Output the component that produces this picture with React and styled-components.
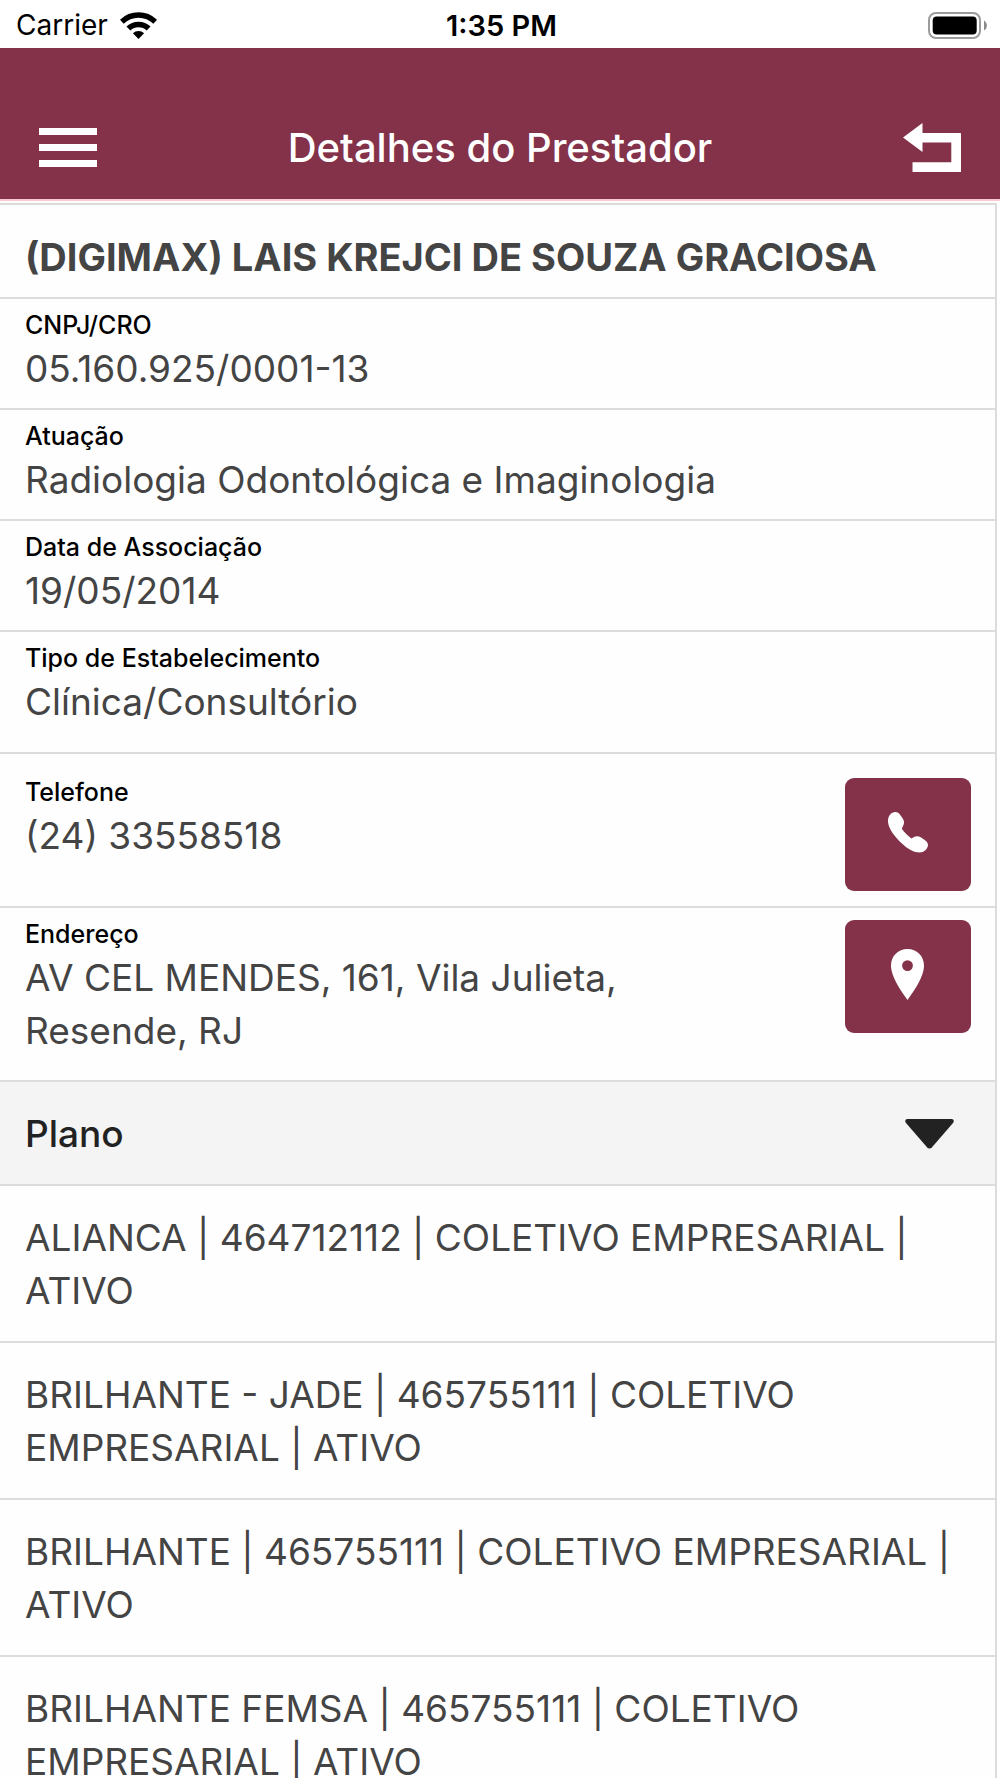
import React, { useState } from 'react';
import { styled, createGlobalStyle } from 'styled-components';

const fields = [
  { label: 'CNPJ/CRO', value: '05.160.925/0001-13' },
  { label: 'Atuação', value: 'Radiologia Odontológica e Imaginologia' },
  { label: 'Data de Associação', value: '19/05/2014' },
  { label: 'Tipo de Estabelecimento', value: 'Clínica/Consultório', last: true },
];

const plans = [
  'ALIANCA | 464712112 | COLETIVO EMPRESARIAL | ATIVO',
  'BRILHANTE - JADE | 465755111 | COLETIVO EMPRESARIAL | ATIVO',
  'BRILHANTE | 465755111 | COLETIVO EMPRESARIAL | ATIVO',
  'BRILHANTE FEMSA | 465755111 | COLETIVO EMPRESARIAL | ATIVO',
];

function WifiIcon() {
  return (
    <svg width="37" height="27" viewBox="0 0 37 27" aria-hidden="true">
      <path d="M1.8 9.7A24 24 0 0 1 35.2 9.7" fill="none" stroke="#000" strokeWidth="5.4" />
      <path d="M8.4 16.6A14.5 14.5 0 0 1 28.6 16.6" fill="none" stroke="#000" strokeWidth="5.6" />
      <path d="M18.5 27L12.9 21.2A8 8 0 0 1 24.1 21.2Z" />
    </svg>
  );
}

function BatteryIcon() {
  return (
    <svg width="59" height="27" viewBox="0 0 59 27" aria-hidden="true">
      <rect x="1" y="1" width="51" height="25" rx="7" fill="none" stroke="#9b9b9b" strokeWidth="2" />
      <rect x="4.7" y="4.5" width="44" height="18" rx="4" />
      <path d="M56 8.5C59.8 10.5 59.8 16.5 56 18.5Z" fill="#8a8a8a" />
    </svg>
  );
}

function MenuIcon() {
  return (
    <svg width="58" height="39" viewBox="0 0 58 39" fill="#fff" aria-hidden="true">
      <rect width="58" height="7" />
      <rect y="16" width="58" height="7" />
      <rect y="32" width="58" height="7" />
    </svg>
  );
}

function BackIcon() {
  return (
    <svg width="58" height="49" viewBox="0 0 58 49" fill="#fff" aria-hidden="true">
      <path d="M0 14.5L19.5 0V10H57.5Q58 10 58 10.5V48.5Q58 49 57.5 49H10Q9.5 49 9.5 48.5V39.3H48.3V19.6H19.5V29Z" />
    </svg>
  );
}

function PhoneIcon() {
  return (
    <svg width="40" height="41" viewBox="0 0 40 41" fill="#fff" aria-hidden="true">
      <path d="M0 8.5C.2 3.5 3.5 0 7.2 0C10 0 11.2 1.5 13 4C14.8 6.5 16 8 16 10.5C16 13.3 14.5 14.5 13.8 16.8C16.5 20.5 19.7 23.7 23.4 26.5C25.5 25.8 26.5 24.3 29 24.3C31.8 24.3 33.5 25.7 36 27.4C38.5 29.1 40 30.5 40 33C39.7 37 36 40.5 31.5 40.5C26 40.5 20.5 37.5 14.5 32C6 24.2-.2 15.5 0 8.5Z" />
    </svg>
  );
}

function PinIcon() {
  return (
    <svg width="34" height="51" viewBox="0 0 34 51" fill="#fff" aria-hidden="true">
      <path
        fillRule="evenodd"
        d="M16.5 0C25.8 0 33 7 33 16.5C33 26.5 25.5 38.5 16.5 51C7.5 38.5 0 26.5 0 16.5C0 7 7.2 0 16.5 0ZM16.5 11.2A5.4 5.4 0 1 0 16.5 22A5.4 5.4 0 1 0 16.5 11.2Z"
      />
    </svg>
  );
}

function CaretIcon() {
  return (
    <svg width="49" height="30" viewBox="0 0 49 30" fill="#222" aria-hidden="true">
      <path d="M2.5 0H46.5C48.6 0 49.5 2.2 48 4L27 28.2C25.5 29.9 23.5 29.9 22 28.2L1 4C-.5 2.2 .4 0 2.5 0Z" />
    </svg>
  );
}

function App() {
  const [open, setOpen] = useState(true);

  return (
    <Screen>
      <GlobalStyle />
      <StatusBar>
        <Carrier>
          Carrier
          <WifiIcon />
        </Carrier>
        <Clock>1:35 PM</Clock>
        <BatteryIcon />
      </StatusBar>
      <Header>
        <HeaderButton type="button" aria-label="Menu">
          <MenuIcon />
        </HeaderButton>
        <HeaderTitle>Detalhes do Prestador</HeaderTitle>
        <HeaderButton type="button" aria-label="Voltar">
          <BackIcon />
        </HeaderButton>
      </Header>
      <Content>
        <ProviderName>(DIGIMAX) LAIS KREJCI DE SOUZA GRACIOSA</ProviderName>
        <Fields>
          {fields.map((field) => (
            <Field key={field.label} $last={field.last}>
              <FieldLabel>{field.label}</FieldLabel>
              <FieldValue>{field.value}</FieldValue>
            </Field>
          ))}
        </Fields>
        <ContactRow $spaced>
          <ContactInfo>
            <FieldLabel>Telefone</FieldLabel>
            <FieldValue>(24) 33558518</FieldValue>
          </ContactInfo>
          <ActionButton type="button" aria-label="Ligar">
            <PhoneIcon />
          </ActionButton>
        </ContactRow>
        <ContactRow>
          <ContactInfo>
            <FieldLabel>Endereço</FieldLabel>
            <FieldValue>AV CEL MENDES, 161, Vila Julieta, Resende, RJ</FieldValue>
          </ContactInfo>
          <ActionButton type="button" aria-label="Ver no mapa">
            <PinIcon />
          </ActionButton>
        </ContactRow>
        <PlanToggle type="button" aria-expanded={open} onClick={() => setOpen(!open)}>
          Plano
          <CaretIcon />
        </PlanToggle>
        {open && (
          <PlanList>
            {plans.map((plan) => (
              <PlanItem key={plan}>{plan}</PlanItem>
            ))}
          </PlanList>
        )}
      </Content>
    </Screen>
  );
}

export default App;

const GlobalStyle = createGlobalStyle`
  * {
    box-sizing: border-box;
  }
  body {
    margin: 0;
    background: #fff;
    font-family: Inter, "Liberation Sans", sans-serif;
  }
  button {
    margin: 0;
    border: none;
    font-family: inherit;
    cursor: pointer;
  }
  svg {
    display: block;
    flex-shrink: 0;
  }
`;

const Screen = styled.div`
  height: 100vh;
  display: flex;
  flex-direction: column;
`;

const StatusBar = styled.div`
  flex-shrink: 0;
  height: 48px;
  padding: 2px 13px 0 16px;
  display: grid;
  grid-template-columns: 1fr auto 1fr;
  align-items: center;
  font-size: 28px;
  color: #000;
  > :last-child {
    justify-self: end;
  }
`;

const Carrier = styled.div`
  display: flex;
  align-items: center;
  gap: 12px;
`;

const Clock = styled.time`
  font-size: 29px;
  font-weight: 600;
`;

const Header = styled.header`
  flex-shrink: 0;
  padding: 48px 39px 0;
  height: 153px;
  display: grid;
  grid-template-columns: 1fr auto 1fr;
  align-items: center;
  background: #83324a;
  border-bottom: 2px solid #fbc9d2;
  > :last-child {
    justify-self: end;
  }
`;

const HeaderButton = styled.button`
  padding: 0;
  background: none;
  justify-self: start;
`;

const HeaderTitle = styled.h1`
  margin: 0;
  font-size: 40px;
  font-weight: 500;
  color: #fff;
`;

const Content = styled.main`
  flex: 1;
  min-height: 0;
  margin: 2px 3px 0 0;
  overflow-y: auto;
  scrollbar-width: none;
  background: #fefefe;
  border-top: 2px solid #dcdcdc;
  border-right: 2px solid #dcdcdc;
`;

const ProviderName = styled.h2`
  margin: 0;
  padding: 26px 25px 13px;
  border-bottom: 2px solid #dcdcdc;
  font-size: 38px;
  line-height: 53px;
  font-weight: 700;
  color: #444;
`;

const Fields = styled.dl`
  margin: 0;
`;

const Field = styled.div`
  padding: 12px 25px ${({ $last }) => ($last ? '24px' : '13px')};
  border-bottom: 2px solid #dcdcdc;
`;

const FieldLabel = styled.dt`
  margin-bottom: 3px;
  font-size: 25px;
  line-height: 28px;
  font-weight: 500;
  color: #000;
`;

const FieldValue = styled.dd`
  margin: 0;
  font-size: 37px;
  line-height: 53px;
  color: #444;
`;

const ContactRow = styled.div`
  padding: ${({ $spaced }) => ($spaced ? '24px 24px 15px 25px' : '12px 24px 23px 25px')};
  display: flex;
  align-items: flex-start;
  justify-content: space-between;
  border-bottom: 2px solid #dcdcdc;
`;

const ContactInfo = styled.dl`
  width: 75%;
  margin: 0;
`;

const ActionButton = styled.button`
  width: 126px;
  height: 113px;
  padding: 0 0 4px;
  display: flex;
  align-items: center;
  justify-content: center;
  background: #83324a;
  border-radius: 9px;
`;

const PlanToggle = styled.button`
  width: 100%;
  padding: 25px 41px 24px 25px;
  display: flex;
  align-items: center;
  justify-content: space-between;
  background: #f4f4f4;
  && {
    border-bottom: 2px solid #dcdcdc;
  }
  font-size: 37px;
  line-height: 53px;
  font-weight: 500;
  color: #222;
`;

const PlanList = styled.ul`
  margin: 0;
  padding: 0;
  list-style: none;
`;

const PlanItem = styled.li`
  padding: 25px 25px 24px;
  border-bottom: 2px solid #dcdcdc;
  font-size: 37px;
  line-height: 53px;
  color: #444;
`;
